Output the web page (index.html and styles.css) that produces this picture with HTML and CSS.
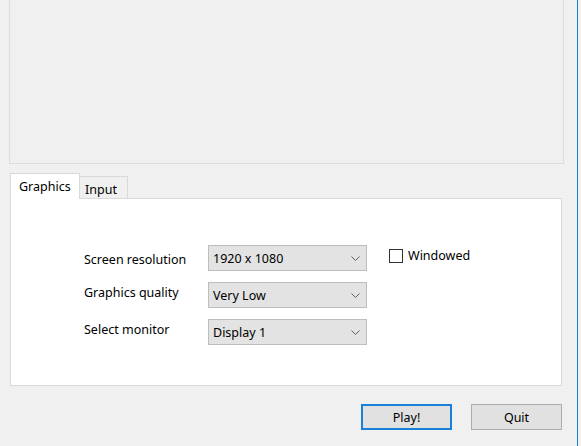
FILE: index.html
```html
<!DOCTYPE html>
<html>
<head>
<meta charset="utf-8">
<link rel="stylesheet" href="styles.css">
</head>
<body>
<div class="window">
  <div class="preview"></div>
  <div class="tabs">
    <div class="tab tab-active">Graphics</div>
    <div class="tab tab-idle">Input</div>
  </div>
  <div class="panel">
    <div class="form">
      <div class="label label-first">Screen resolution</div>
      <div class="combo"><span>1920 x 1080</span><svg class="chev" width="9" height="5" viewBox="0 0 9 5"><polyline points="0.5,0.5 4.5,4.5 8.5,0.5" fill="none" stroke="#606060" stroke-width="1"/></svg></div>
      <label class="check"><span class="box"></span><span>Windowed</span></label>
      <div class="label">Graphics quality</div>
      <div class="combo"><span>Very Low</span><svg class="chev" width="9" height="5" viewBox="0 0 9 5"><polyline points="0.5,0.5 4.5,4.5 8.5,0.5" fill="none" stroke="#606060" stroke-width="1"/></svg></div>
      <div></div>
      <div class="label">Select monitor</div>
      <div class="combo"><span>Display 1</span><svg class="chev" width="9" height="5" viewBox="0 0 9 5"><polyline points="0.5,0.5 4.5,4.5 8.5,0.5" fill="none" stroke="#606060" stroke-width="1"/></svg></div>
      <div></div>
    </div>
  </div>
  <div class="buttons">
    <div class="btn btn-default">Play!</div>
    <div class="btn">Quit</div>
  </div>
</div>
</body>
</html>
```
FILE: styles.css
```css
html, body {
  margin: 0;
  padding: 0;
}
body {
  width: 581px;
  height: 446px;
  overflow: hidden;
  background: #f0f0f0;
  font-family: "Noto Sans", "Open Sans", sans-serif;
  font-size: 12.5px;
  color: #000;
}
.window {
  width: 577px;
  height: 446px;
  border-right: 1px solid #1a7fd4;
}
.preview {
  margin-left: 9px;
  width: 555px;
  height: 164px;
  box-sizing: border-box;
  border: 1px solid #dcdcdc;
  border-top: none;
}
.tabs {
  margin-top: 9px;
  margin-left: 10px;
  height: 25px;
  display: flex;
  align-items: flex-end;
}
.tab {
  box-sizing: border-box;
  border: 1px solid #d9d9d9;
  border-bottom: none;
  line-height: 16px;
}
.tab-active {
  position: relative;
  z-index: 1;
  width: 70px;
  height: 26px;
  margin-bottom: -1px;
  background: #fff;
  padding: 5px 0 0 8px;
}
.tab-idle {
  width: 49px;
  height: 22px;
  margin-left: -1px;
  background: #f0f0f0;
  padding: 5px 0 0 5px;
}
.panel {
  margin-left: 10px;
  width: 552px;
  height: 188px;
  box-sizing: border-box;
  background: #fff;
  border: 1px solid #d9d9d9;
  padding: 46px 0 0 73px;
}
.form {
  display: grid;
  grid-template-columns: 124px 159px auto;
  grid-auto-rows: 26px;
  row-gap: 11px;
}
.label {
  align-self: start;
  line-height: 16px;
  padding-top: 3px;
}
.label-first {
  padding-top: 7px;
}
.combo {
  box-sizing: border-box;
  background: #e3e3e3;
  border: 1px solid #bdbdbd;
  display: flex;
  align-items: center;
  justify-content: space-between;
  padding: 0 6px 0 4px;
  line-height: 16px;
}
.combo span {
  padding-top: 1px;
}
.chev {
  display: block;
}
.check {
  display: flex;
  align-items: center;
  align-self: start;
  margin-top: 3px;
  margin-left: 22px;
  gap: 5px;
  line-height: 16px;
}
.box {
  width: 14px;
  height: 14px;
  box-sizing: border-box;
  border: 1px solid #333;
  background: #fff;
}
.buttons {
  margin-top: 18px;
  padding-right: 15px;
  display: flex;
  justify-content: flex-end;
  gap: 19px;
}
.btn {
  box-sizing: border-box;
  width: 91px;
  height: 26px;
  background: #e1e1e1;
  border: 1px solid #adadad;
  display: flex;
  align-items: center;
  justify-content: center;
  line-height: 16px;
  padding-top: 1px;
}
.btn-default {
  border: 2px solid #1a7fd8;
}
```
